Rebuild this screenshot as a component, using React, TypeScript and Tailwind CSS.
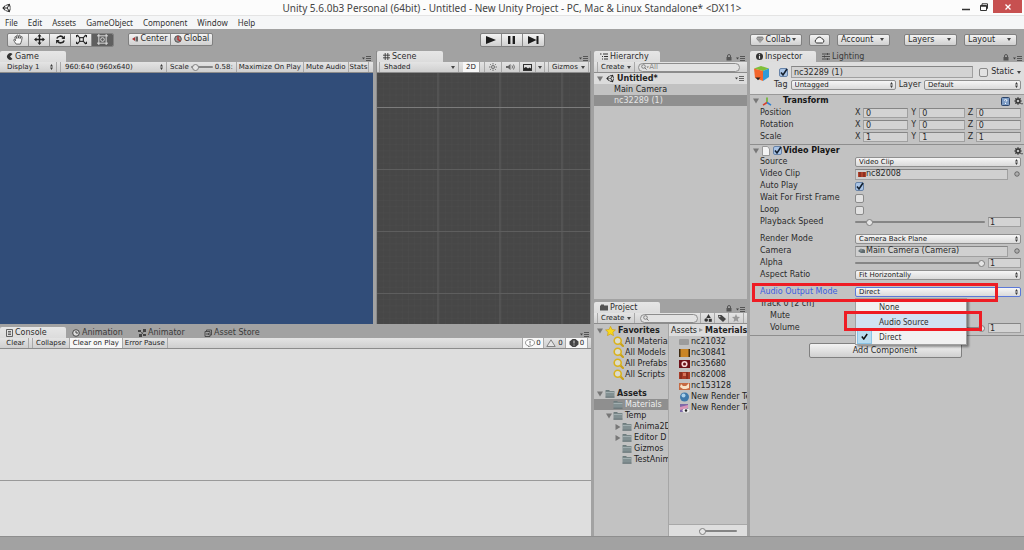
import React from "react";
import type { ReactNode } from "react";
import { FaUnity } from "react-icons/fa";

const track =
  "appearance-none bg-transparent h-[8px] min-w-0 [&::-webkit-slider-runnable-track]:h-[2px] [&::-webkit-slider-runnable-track]:rounded-full [&::-webkit-slider-runnable-track]:bg-[#858585] [&::-webkit-slider-thumb]:appearance-none [&::-webkit-slider-thumb]:-mt-[2px] [&::-webkit-slider-thumb]:size-[7px] [&::-webkit-slider-thumb]:rounded-full [&::-webkit-slider-thumb]:bg-[#e6e6e6] [&::-webkit-slider-thumb]:border [&::-webkit-slider-thumb]:border-[#808080]";

const fieldBox =
  "h-[10px] min-w-0 w-full border border-[#a0a0a0] border-t-[#858585] bg-[#d3d3d3] px-[2px] text-[8px] leading-[8px] text-[#2b2b2b]";

const raised =
  "bg-linear-to-b from-[#f3f3f3] to-[#d0d0d0] border border-[#808080] rounded-[2px]";

function Down({ className = "" }: { className?: string }) {
  return (
    <svg viewBox="0 0 4 3" className={`w-[4px] h-[3px] shrink-0 ${className}`} aria-hidden="true">
      <path d="M0 0h4L2 3z" fill="#444" />
    </svg>
  );
}

function UpDown() {
  return (
    <svg viewBox="0 0 3 6" className="pointer-events-none absolute right-[3px] top-[2px] h-[6px] w-[3px]" aria-hidden="true">
      <path d="M0 2.5 1.5 0 3 2.5zM0 3.5h3L1.500 6z" fill="#3a3a3a" />
    </svg>
  );
}

function Lock() {
  return (
    <svg viewBox="0 0 6 7" className="h-[7px] w-[6px]" aria-hidden="true">
      <path d="M1.500 3V2a1.500 1.500 0 0 1 3 0v1" fill="none" stroke="#555" />
      <rect x="0.500" y="3" width="5" height="3.500" fill="#555" />
    </svg>
  );
}

function PaneMenu({ lock = false }: { lock?: boolean }) {
  return (
    <div className="ml-auto flex items-end gap-[4px] pb-[1px] pr-[2px]">
      {lock && <Lock />}
      <button aria-label="Pane menu" className="block">
        <svg viewBox="0 0 9 5" className="h-[5px] w-[9px]">
          <path d="M0 1.500h3L1.500 3.500z" fill="#444" />
          <path d="M4 .5h5M4 2.500h5M4 4.500h5" stroke="#555" />
        </svg>
      </button>
    </div>
  );
}

function Tab({ icon, children, active = false, wide = false }: { icon: ReactNode; children: ReactNode; active?: boolean; wide?: boolean }) {
  return (
    <button
      className={`flex h-full shrink-0 items-center gap-[2px] pl-[6px] text-[8px] leading-[10px] whitespace-nowrap ${wide ? "" : "w-[66px]"} ${
        active ? "rounded-t-[2px] bg-linear-to-b from-[#e6e6e6] to-[#dcdcdc] text-[#2d2d2d]" : "text-[#3a3a3a]"
      }`}
    >
      {icon}
      {children}
    </button>
  );
}

function TabBar({ children, lock, menu = true }: { children: ReactNode; lock?: boolean; menu?: boolean }) {
  return (
    <div className="flex h-[11px] shrink-0 bg-[#a2a2a2]">
      {children}
      {menu && <PaneMenu lock={lock} />}
    </div>
  );
}

function Bar({ children }: { children?: ReactNode }) {
  return (
    <div className="flex h-[11px] shrink-0 items-stretch overflow-hidden border-b border-[#8c8c8c] bg-linear-to-b from-[#e4e4e4] to-[#cfcfcf] text-[7px] leading-[10px] whitespace-nowrap text-[#222222]">
      {children}
    </div>
  );
}

function BarButton({ children, on = false, className = "px-[3px]", label }: { children: ReactNode; on?: boolean; className?: string; label?: string }) {
  return (
    <button aria-label={label} className={`flex shrink-0 items-center justify-center border-r border-[#a9a9a9] ${on ? "bg-[#f7f7f7]" : ""} ${className}`}>
      {children}
    </button>
  );
}

function BarSelect({ value, label, className, updown = false }: { value: string; label: string; className: string; updown?: boolean }) {
  return (
    <div className={`relative shrink-0 border-r border-[#a9a9a9] ${className}`}>
      <select aria-label={label} className="block h-full w-full appearance-none bg-transparent pl-[4px] text-[7px] leading-[10px]">
        <option>{value}</option>
      </select>
      {updown ? <UpDown /> : <Down className="pointer-events-none absolute right-[3px] top-[4px]" />}
    </div>
  );
}

function Popup({ id, value, label, focus = false }: { id?: string; value: string; label?: string; focus?: boolean }) {
  return (
    <div className="relative w-full min-w-0">
      <select
        id={id}
        aria-label={label}
        className={`block h-[10px] w-full appearance-none rounded-[2px] border bg-linear-to-b from-[#f6f6f6] to-[#dadada] pl-[3px] text-[7px] leading-[8px] text-[#222222] ${
          focus ? "border-[#5b78d8]" : "border-[#8f8f8f]"
        }`}
      >
        <option>{value}</option>
      </select>
      <UpDown />
    </div>
  );
}

function Check({ id, checked = false, label }: { id?: string; checked?: boolean; label?: string }) {
  return (
    <span className="relative block size-[9px] shrink-0">
      <input
        id={id}
        type="checkbox"
        aria-label={label}
        defaultChecked={checked}
        className="peer block size-[9px] appearance-none rounded-[2px] border border-[#8a8a8a] bg-[#e2e2e2] checked:border-[#6783a8] checked:bg-[#a9c4e6]"
      />
      <svg viewBox="0 0 9 9" className="pointer-events-none absolute inset-0 hidden size-[9px] peer-checked:block">
        <path d="M2 4.500 4 7 8 1" fill="none" stroke="#14202e" strokeWidth="1.600" />
      </svg>
    </span>
  );
}

function Row({ label, id, children, indent = false, blue = false }: { label: string; id?: string; children?: ReactNode; indent?: boolean; blue?: boolean }) {
  return (
    <div className={`grid h-[12px] grid-cols-[95px_1fr] items-center pr-[3px] pl-[10px] ${blue ? "text-[#3a5fe0]" : ""}`}>
      <label htmlFor={id} className={`whitespace-nowrap ${indent ? "pl-[10px]" : ""}`}>
        {label}
      </label>
      {children}
    </div>
  );
}

function SliderField({ id, value, label }: { id: string; value: number; label: string }) {
  return (
    <div className="flex items-center gap-[3px]">
      <input id={id} type="range" min={0} max={100} defaultValue={value} className={`flex-1 ${track}`} />
      <input aria-label={label} defaultValue="1" className="h-[10px] w-[33px] border border-[#a0a0a0] border-t-[#858585] bg-[#d3d3d3] px-[1px] text-[8px] leading-[8px]" />
    </div>
  );
}

function ObjectField({ icon, children }: { icon: ReactNode; children: ReactNode }) {
  return (
    <div className="flex items-center gap-[6px] pr-[1px]">
      <button className="flex h-[11px] flex-1 items-center border border-[#a0a0a0] border-t-[#858585] bg-[#d0d0d0] pl-[2px] whitespace-nowrap">
        {icon}
        {children}
      </button>
      <svg viewBox="0 0 6 6" className="size-[6px] shrink-0">
        <circle cx="3" cy="3" r="2.200" fill="none" stroke="#555" strokeWidth=".9" />
        <circle cx="3" cy="3" r=".5" fill="#555" />
      </svg>
    </div>
  );
}

function Fold({ open = true }: { open?: boolean }) {
  return (
    <svg viewBox="0 0 6 6" className="size-[6px] shrink-0" aria-hidden="true">
      <path d={open ? "M0 .5h6L3 5.500z" : "M.5 0v6l5-3z"} fill="#777" />
    </svg>
  );
}

function Folder({ className = "" }: { className?: string }) {
  return (
    <svg viewBox="0 0 10 9" className={`h-[9px] w-[10px] shrink-0 ${className}`} aria-hidden="true">
      <path d="M.5 1.500Q.5 1 1 1h3l1 1h4q.5 0 .5.500v1h-9z" fill="#6d7b7d" />
      <path d="M.5 3h9v5q0 .5-.5.500H1q-.5 0-.5-.5z" fill="#829092" />
      <path d="M.5 3.300h9" stroke="#b4c0c2" strokeWidth=".8" />
      <path d="M.5 8.200h9" stroke="#59686b" strokeWidth=".8" />
    </svg>
  );
}

function Magnifier() {
  return (
    <svg viewBox="0 0 11 11" className="size-[11px] shrink-0" aria-hidden="true">
      <path d="m7 7 3 3" stroke="#c9a21a" strokeWidth="2.200" strokeLinecap="round" />
      <circle cx="4.700" cy="4.700" r="3.500" fill="#dcdccc" stroke="#d9b21c" strokeWidth="1.600" />
    </svg>
  );
}

function Gear() {
  return (
    <svg viewBox="0 0 9 8" className="h-[8px] w-[9px] shrink-0" aria-hidden="true">
      <circle cx="4" cy="4" r="2" fill="none" stroke="#333" strokeWidth="1.400" />
      <path d="M4 .3v1.500M4 6.200v1.500M.3 4h1.500M6.200 4h1.500M1.400 1.400l1 1M5.600 5.600l1 1M1.400 6.600l1-1M5.600 2.400l1-1" stroke="#333" strokeWidth="1.200" />
      <path d="M7 6.300h2L8 7.800z" fill="#333" />
    </svg>
  );
}

function SearchBox({ placeholder = "", label }: { placeholder?: string; label: string }) {
  return (
    <div className="flex h-[9px] min-w-0 flex-1 items-center self-center rounded-full border border-[#8d8d8d] bg-[#e2e2e2] pl-[2px]">
      <svg viewBox="0 0 8 6" className="h-[6px] w-[8px] shrink-0" aria-hidden="true">
        <circle cx="2.500" cy="2.500" r="1.800" fill="none" stroke="#777" strokeWidth=".9" />
        <path d="m3.800 3.800 1.700 1.800" stroke="#777" />
        {placeholder && <path d="M5.500 2.500h2.500L6.700 4z" fill="#777" />}
      </svg>
      <input aria-label={label} placeholder={placeholder} className="h-[8px] w-full min-w-0 bg-transparent text-[7px] leading-[8px] placeholder:text-[#888888]" />
    </div>
  );
}

function Tool({ children, label, on = false }: { children: ReactNode; label: string; on?: boolean }) {
  return (
    <button aria-label={label} className={`flex w-[21px] items-center justify-center border-r border-[#8a8a8a] last:border-r-0 ${on ? "bg-[#5f5f5f]" : ""}`}>
      {children}
    </button>
  );
}

function TopMenu({ children, className }: { children: ReactNode; className: string }) {
  return (
    <button className={`flex h-[12px] items-center justify-between pr-[5px] pl-[3px] ${raised} ${className}`}>
      {children}
      <Down />
    </button>
  );
}

const axes = ["X", "Y", "Z"];

function Vector({ name, value }: { name: string; value: string }) {
  return (
    <Row label={name}>
      <div className="grid grid-cols-3 gap-[3px]">
        {axes.map((a) => (
          <label key={a} className="flex min-w-0 items-center gap-[1px]">
            <span className="w-[7px] shrink-0">{a}</span>
            <input aria-label={`${name} ${a}`} defaultValue={value} className={fieldBox} />
          </label>
        ))}
      </div>
    </Row>
  );
}

function TitleBar() {
  return (
    <header className="flex h-[15px] items-center bg-[#fcfcfc] pr-[12px] font-['Noto_Sans',sans-serif]">
      <FaUnity className="ml-[2px] size-[10px] shrink-0 text-[#222222]" />
      <h1 className="flex-1 text-center text-[10px] leading-[14px] whitespace-nowrap text-[#444444]">
        Unity 5.6.0b3 Personal (64bit) - Untitled - New Unity Project - PC, Mac &amp; Linux Standalone* &lt;DX11&gt;
      </h1>
      <div className="absolute top-0 right-[2px] flex h-[13px] items-center gap-[10px]">
        <button aria-label="Minimize">
          <svg viewBox="0 0 8 8" className="size-[8px]"><path d="M0 6.500h8" stroke="#333" strokeWidth="1.500" /></svg>
        </button>
        <button aria-label="Restore">
          <svg viewBox="0 0 8 8" className="size-[8px]">
            <path d="M2 2V.8h5.500V5.500H6.500" fill="none" stroke="#333" />
            <path d="M.5 2.500h6v5h-6z" fill="#fff" stroke="#333" />
            <path d="M.5 3h6" stroke="#333" strokeWidth="1.500" />
          </svg>
        </button>
        <button aria-label="Close" className="-ml-[5px] flex h-[13px] w-[29px] items-center justify-center bg-[#c75050]">
          <svg viewBox="0 0 6 6" className="size-[6px]"><path d="m.5.5 5 5M5.500.5l-5 5" stroke="#fff" strokeWidth="1.300" /></svg>
        </button>
      </div>
    </header>
  );
}

function MainToolbar() {
  return (
    <div className="grid h-[22px] shrink-0 grid-cols-[1fr_auto_1fr] items-center bg-[#a2a2a2] px-[7px] pb-[1px] text-[8px]">
      <div className="flex gap-[14px]">
        <div className={`flex h-[14px] overflow-hidden ${raised}`}>
          <Tool label="Hand">
            <svg viewBox="0 0 12 12" className="size-[11px]">
              <path d="M3.500 11C2 9 1 7.500.8 6.300c.6-.6 1.400 0 2 .9L2 3.300c.5-.8 1.200-.5 1.500.3L4.200 5 4 1.600c.5-.8 1.300-.6 1.500.2L6 4.600l.6-3c.4-.6 1.300-.4 1.300.4L7.700 5l1.200-2c.7-.6 1.400 0 1.100.8C9.500 6 9.500 8 8 11z" fill="#fafafa" stroke="#333" strokeWidth=".8" />
            </svg>
          </Tool>
          <Tool label="Move">
            <svg viewBox="0 0 12 12" className="size-[11px]">
              <path d="M6 1v10M1 6h10" stroke="#222" strokeWidth="1.500" />
              <path d="M6 0 8.200 2.800H3.800zM6 12l2.200-2.800H3.800zM0 6l2.800-2.200v4.400zM12 6 9.200 3.800v4.400z" fill="#222" />
            </svg>
          </Tool>
          <Tool label="Rotate">
            <svg viewBox="0 0 12 12" className="size-[11px]">
              <path d="M2 5C3 1.800 7.500 1.500 9 4M10 7c-1 3.200-5.500 3.500-7 1" fill="none" stroke="#222" strokeWidth="1.700" />
              <path d="M10.800 1.500V5.500H7zM1.200 10.500v-4H5z" fill="#222" />
            </svg>
          </Tool>
          <Tool label="Scale">
            <svg viewBox="0 0 12 12" className="size-[11px]">
              <path d="m1 1 10 10M11 1 1 11" stroke="#222" strokeWidth="1.200" />
              <path d="M0 1h3L0 4zM12 1v3L9 1zM0 11V8l3 3zM12 11H9l3-3z" fill="#222" />
              <rect x="4" y="4" width="4" height="4" fill="#eee" stroke="#222" strokeWidth="1.200" />
            </svg>
          </Tool>
          <Tool label="Rect" on>
            <svg viewBox="0 0 12 12" className="size-[11px]">
              <path d="M2 0v12M10 0v12M0 2h12M0 10h12" stroke="#e6e6e6" strokeWidth="1" />
              <circle cx="6" cy="6" r="2" fill="none" stroke="#ddd" strokeWidth="1" />
            </svg>
          </Tool>
        </div>
        <div className={`flex h-[13px] text-[#2a2a2a] ${raised}`}>
          <button className="flex w-[42px] items-center justify-center gap-[2px] border-r border-[#8a8a8a]">
            <svg viewBox="0 0 7 6" className="h-[6px] w-[7px]"><path d="M0 3 3 1v4z" fill="#a33" /><path d="M3.500.5H6v5H3.500z" fill="#666" /></svg>
            Center
          </button>
          <button className="flex w-[41px] items-center justify-center gap-[2px]">
            <svg viewBox="0 0 8 8" className="size-[8px]"><circle cx="4" cy="4" r="3.300" fill="#999" stroke="#555" /><path d="M4 1v3.500l2.500 1.500" fill="none" stroke="#b33" strokeWidth="1.400" /></svg>
            Global
          </button>
        </div>
      </div>
      <div className={`flex h-[14px] ${raised}`}>
        <Tool label="Play"><svg viewBox="0 0 10 8" className="h-[8px] w-[10px]"><path d="M0 0 10 4 0 8z" fill="#1c1c1c" /></svg></Tool>
        <Tool label="Pause"><svg viewBox="0 0 7 8" className="h-[8px] w-[7px]"><path d="M0 0h2.400v8H0zM4.600 0H7v8H4.600z" fill="#1c1c1c" /></svg></Tool>
        <Tool label="Step"><svg viewBox="0 0 11 8" className="h-[8px] w-[11px]"><path d="M0 0 8.500 4 0 8zM8.500 0h2v8h-2z" fill="#1c1c1c" /></svg></Tool>
      </div>
      <div className="flex justify-end gap-[7px] text-[#2a2a2a]">
        <button className={`flex h-[12px] w-[52px] items-center justify-center gap-[2px] ${raised}`}>
          <svg viewBox="0 0 8 7" className="h-[7px] w-[8px]"><path d="M1.500.5h5L8 2.500 4 7 0 2.500z" fill="#888" /><path d="M0 2.500h8M4 7 2.500 2.500M4 7l1.500-4.500" stroke="#bbb" strokeWidth=".5" /></svg>
          Collab
          <Down />
        </button>
        <button aria-label="Cloud services" className={`flex h-[12px] w-[21px] items-center justify-center ${raised}`}>
          <svg viewBox="0 0 11 8" className="h-[8px] w-[11px]"><path d="M2.700 7a2 2 0 0 1-.2-3.800 3 3 0 0 1 5.600-.4A2.200 2.200 0 0 1 8.500 7z" fill="#f5f5f5" stroke="#333" /></svg>
        </button>
        <TopMenu className="w-[53px]">Account</TopMenu>
        <TopMenu className="ml-[7px] w-[53px]">Layers</TopMenu>
        <TopMenu className="w-[53px]">Layout</TopMenu>
      </div>
    </div>
  );
}

function GamePane() {
  return (
    <section className="flex min-w-0 flex-col bg-[#314d79]">
      <TabBar>
        <Tab active icon={<svg viewBox="0 0 7 7" className="size-[7px]"><path d="M6.500 1A3.300 3.300 0 1 0 6.500 6L4 3.500z" fill="#333" /></svg>}>Game</Tab>
      </TabBar>
      <Bar>
        <BarSelect label="Display" value="Display 1" className="ml-[3px] w-[54px]" updown />
        <BarSelect label="Resolution" value="960:640 (960x640)" className="ml-[3px] w-[107px] border-l" updown />
        <label className="flex shrink-0 items-center gap-[2px] border-r border-[#a9a9a9] px-[3px]">
          Scale
          <input type="range" min={0} max={100} defaultValue={5} className={`w-[22px] ${track}`} />
          <span>0.58:</span>
        </label>
        <BarButton className="px-[2px]">Maximize On Play</BarButton>
        <BarButton className="px-[2px]">Mute Audio</BarButton>
        <BarButton className="px-[1px]">Stats</BarButton>
      </Bar>
    </section>
  );
}

function ScenePane() {
  return (
    <section className="flex min-w-0 flex-col border-x border-[#8c8c8c] bg-[#474747]">
      <TabBar>
        <Tab active icon={<svg viewBox="0 0 8 8" className="size-[7px]"><path d="M2.500 0v8M5.500 0v8M0 2.500h8M0 5.500h8" stroke="#333" /></svg>}>Scene</Tab>
      </TabBar>
      <Bar>
        <BarSelect label="Draw mode" value="Shaded" className="ml-[2px] w-[80px] border-l" />
        <BarButton on className="ml-[4px] w-[17px]">2D</BarButton>
        <BarButton label="Lighting" className="ml-[4px] w-[18px] border-l">
          <svg viewBox="0 0 8 8" className="size-[8px]"><circle cx="4" cy="4" r="1.500" fill="none" stroke="#555" strokeWidth=".8" /><path d="M4 0v1.500M4 6.500V8M0 4h1.500M6.500 4H8M1.200 1.200l1 1M5.800 5.800l1 1M1.200 6.800l1-1M5.800 2.200l1-1" stroke="#555" strokeWidth=".8" /></svg>
        </BarButton>
        <BarButton label="Audio" className="w-[18px]">
          <svg viewBox="0 0 10 8" className="h-[8px] w-[10px]"><path d="M0 3h2l2.500-2v6L2 5H0z" fill="#666" /><path d="M6 2.500q1 1.500 0 3M7.500 1.500q1.800 2.500 0 5" fill="none" stroke="#666" strokeWidth=".9" /></svg>
        </BarButton>
        <BarButton label="Effects" className="w-[16px]">
          <svg viewBox="0 0 9 7" className="h-[7px] w-[9px]"><rect x=".5" y=".5" width="8" height="6" fill="#ddd" stroke="#333" /><path d="M1 6V4l2-1 2 1.500 1.500-1L8 4.500V6z" fill="#222" /></svg>
        </BarButton>
        <BarButton label="Effects menu" className="w-[9px]"><Down /></BarButton>
        <BarButton className="ml-[3px] gap-[3px] border-l px-[3px]">Gizmos<Down /></BarButton>
        <div className="ml-[3px] flex w-[60px] shrink-0"><SearchBox label="Search scene" /></div>
      </Bar>
      <svg className="min-h-0 w-full flex-1" aria-label="Scene grid">
        <defs>
          <pattern id="minor" width="6.200" height="6.200" patternUnits="userSpaceOnUse" y="34">
            <path d="M0 0H6.200M0 0V6.200" stroke="#4d4d4d" strokeWidth=".7" />
          </pattern>
          <pattern id="major" width="62" height="62" patternUnits="userSpaceOnUse" x="0" y="34">
            <path d="M0 .5H62M61 0V62" stroke="#5e5e5e" strokeWidth="1" />
          </pattern>
        </defs>
        <rect width="100%" height="100%" fill="url(#minor)" />
        <rect width="100%" height="100%" fill="url(#major)" />
        <path d="M0 34.500H4000" stroke="#7c7c7c" />
      </svg>
    </section>
  );
}

function ConsolePane() {
  return (
    <section className="flex min-h-0 flex-[209] flex-col bg-[#dedede]">
      <TabBar>
        <Tab active icon={<svg viewBox="0 0 7 8" className="h-[8px] w-[7px]"><path d="M.5.5h6v7h-6zM2 2.500h3M2 4h3M2 5.500h3" fill="none" stroke="#555" strokeWidth=".9" /></svg>}>Console</Tab>
        <Tab icon={<svg viewBox="0 0 8 8" className="size-[8px]"><circle cx="4" cy="4" r="3.300" fill="#ddd" stroke="#444" /><path d="M4 2v2h2" fill="none" stroke="#444" /></svg>}>Animation</Tab>
        <Tab icon={<svg viewBox="0 0 8 8" className="size-[8px]"><path d="M0 1h3v2H0zM5 0h3v3H5zM1 5h3v3H1zM5 5h3v2H5z" fill="#444" /><path d="M2 2l4 4M6 2 3 6" stroke="#444" strokeWidth=".7" /></svg>}>Animator</Tab>
        <Tab wide icon={<svg viewBox="0 0 8 8" className="size-[8px]"><path d="M1 2.500h5v5H1zM2.500 2.500V1h5v5H6M3 4v2M4.500 4v2" fill="none" stroke="#444" strokeWidth=".9" /></svg>}>Asset Store</Tab>
      </TabBar>
      <Bar>
        <BarButton className="ml-[3px] w-[26px]">Clear</BarButton>
        <BarButton className="ml-[3px] border-l px-[3px]">Collapse</BarButton>
        <BarButton on>Clear on Play</BarButton>
        <BarButton className="px-[2px]">Error Pause</BarButton>
        <div className="ml-auto flex pr-[3px]">
          <BarButton on className="w-[22px] gap-[1px] border-l">
            <svg viewBox="0 0 10 8" className="h-[8px] w-[10px]"><path d="M5 .5c2.500 0 4.500 1.300 4.500 3.300S7.500 7 5 7L3.500 8V6.800C1.500 6.400.5 5.300.5 3.800.5 1.800 2.500.5 5 .5z" fill="#fff" stroke="#777" strokeWidth=".8" /><path d="M5 2v2.500M5 5.200v.9" stroke="#666" /></svg>0
          </BarButton>
          <BarButton className="w-[22px] gap-[2px]">
            <svg viewBox="0 0 10 8" className="h-[8px] w-[10px]"><path d="M5 .8 9.200 7.500H.8z" fill="#e4e4e4" stroke="#777" strokeWidth=".9" /></svg>0
          </BarButton>
          <BarButton on className="w-[22px] gap-[1px]">
            <svg viewBox="0 0 10 8" className="h-[8px] w-[10px]"><path d="M3.500 0h3L9.500 2.500v3L6.500 8h-3L.5 5.500v-3z" fill="#444" /><path d="M5 1.500v3M5 5.500v1" stroke="#ddd" /></svg>0
          </BarButton>
        </div>
      </Bar>
      <div className="flex-[131] border-b border-[#999999]" />
      <div className="flex-[55]" />
    </section>
  );
}

function HierarchyPane() {
  return (
    <section className="flex min-h-0 flex-[249] flex-col bg-[#c2c2c2]">
      <TabBar lock>
        <Tab active icon={<svg viewBox="0 0 8 7" className="h-[7px] w-[8px]"><path d="M0 1h1.500M3 1h5M2 3.500h1M4 3.500h4M2 6h1M4 6h4" stroke="#333" /></svg>}>Hierarchy</Tab>
      </TabBar>
      <Bar>
        <BarButton className="ml-[3px] mr-[3px] gap-[3px] border-l px-[3px]">Create<Down /></BarButton>
        <SearchBox label="Search hierarchy" placeholder="All" />
        <span className="w-[7px]" />
      </Bar>
      <ul className="text-[8px] leading-[11px] text-[#222222]">
        <li className="flex h-[11px] items-center gap-[3px] bg-[#dcdcdc] pr-[3px] pl-[3px] font-bold">
          <Fold />
          <FaUnity className="size-[9px]" />
          <span className="-ml-px">Untitled*</span>
          <svg viewBox="0 0 9 5" className="ml-auto h-[5px] w-[9px]"><path d="M0 1.500h3L1.500 3.500z" fill="#444" /><path d="M4 .5h5M4 2.500h5M4 4.500h5" stroke="#666" /></svg>
        </li>
        <li className="pl-[20px]">Main Camera</li>
        <li className="bg-[#8f8f8f] pl-[20px] text-[#e6e6e6]">nc32289 (1)</li>
      </ul>
    </section>
  );
}

function TreeRow({ icon, children, pad, fold, selected = false, bold = false }: { icon: ReactNode; children: ReactNode; pad: string; fold?: "open" | "closed"; selected?: boolean; bold?: boolean }) {
  return (
    <li className={`flex h-[11px] items-center gap-[1px] overflow-hidden whitespace-nowrap ${pad} ${selected ? "bg-[#8f8f8f] text-[#eeeeee]" : ""} ${bold ? "font-bold" : ""}`}>
      {fold ? <Fold open={fold === "open"} /> : <span className="w-[6px] shrink-0" />}
      {icon}
      {children}
    </li>
  );
}

function Asset({ icon, children }: { icon: ReactNode; children: ReactNode }) {
  return (
    <li className="flex h-[11px] items-center gap-[1px] overflow-hidden pl-[10px] whitespace-nowrap">
      {icon}
      {children}
    </li>
  );
}

function ProjectPane() {
  return (
    <section className="flex min-h-0 flex-[234] flex-col bg-[#c2c2c2]">
      <TabBar lock>
        <Tab active icon={<svg viewBox="0 0 8 7" className="h-[7px] w-[8px]"><path d="M0 1.500h1V.5h3v1h4V6.500H0z" fill="#555" /></svg>}>Project</Tab>
      </TabBar>
      <Bar>
        <BarButton className="ml-[3px] mr-[5px] gap-[3px] border-l px-[3px]">Create<Down /></BarButton>
        <SearchBox label="Search project" />
        <BarButton label="Search by type" className="ml-[2px] w-[15px] border-l">
          <svg viewBox="0 0 8 8" className="size-[8px]"><path d="M4.500 0 6.800 4H2.200z" fill="#333" /><circle cx="2.200" cy="6" r="1.800" fill="#333" /><path d="M4.800 4.800h3v3h-3z" fill="#333" /></svg>
        </BarButton>
        <BarButton label="Search by label" className="w-[14px]">
          <svg viewBox="0 0 8 8" className="size-[8px]"><path d="M0 1h3.500L8 5 5 8 .5 4z" fill="#444" /><circle cx="1.800" cy="2.500" r=".7" fill="#ddd" /></svg>
        </BarButton>
        <BarButton label="Save search" className="mr-[3px] w-[15px]">
          <svg viewBox="0 0 8 8" className="size-[8px]"><path d="m4 0 1.200 2.800L8 3 5.800 5l.7 3L4 6.400 1.500 8l.7-3L0 3l2.800-.2z" fill="#999" /></svg>
        </BarButton>
      </Bar>
      <div className="grid min-h-0 flex-1 grid-cols-[75fr_78fr] text-[8px] leading-[11px] text-[#222222]">
        <ul className="min-w-0 overflow-hidden border-r border-[#a6a6a6] pt-[1px]">
          <TreeRow bold fold="open" pad="pl-[3px]" icon={<svg viewBox="0 0 11 10" className="mr-[1px] ml-[1px] h-[10px] w-[11px] shrink-0"><path d="m5.500.3 1.500 3.200 3.400.4-2.500 2.300.7 3.500L5.500 8 2.400 9.700l.7-3.500L.6 3.900l3.400-.4z" fill="#f8d81c" stroke="#c99a18" strokeWidth=".6" /></svg>}>Favorites</TreeRow>
          {["All Materia", "All Models", "All Prefabs", "All Scripts"].map((s) => (
            <TreeRow key={s} pad="pl-[12px]" icon={<Magnifier />}>{s}</TreeRow>
          ))}
          <li className="h-[8px]" />
          <TreeRow bold fold="open" pad="pl-[3px]" icon={<Folder className="mr-[1px] ml-[1px]" />}>Assets</TreeRow>
          <TreeRow selected pad="pl-[12px]" icon={<Folder className="mr-[1px]" />}>Materials</TreeRow>
          <TreeRow fold="open" pad="pl-[12px]" icon={<Folder className="mr-[1px]" />}>Temp</TreeRow>
          <TreeRow fold="closed" pad="pl-[21px]" icon={<Folder className="mr-[1px]" />}>Anima2D</TreeRow>
          <TreeRow fold="closed" pad="pl-[21px]" icon={<Folder className="mr-[1px]" />}>Editor D</TreeRow>
          <TreeRow pad="pl-[21px]" icon={<Folder className="mr-[1px]" />}>Gizmos</TreeRow>
          <TreeRow pad="pl-[21px]" icon={<Folder className="mr-[1px]" />}>TestAnim</TreeRow>
        </ul>
        <div className="flex min-w-0 flex-col">
          <nav className="flex h-[12px] shrink-0 items-center gap-[2px] overflow-hidden bg-[#dcdcdc] pl-[2px] whitespace-nowrap">
            <span>Assets</span>
            <svg viewBox="0 0 4 4" className="size-[4px] shrink-0"><path d="M0 0v4l4-2z" fill="#999" /></svg>
            <strong>Materials</strong>
          </nav>
          <ul className="flex-1">
            <Asset icon={<svg viewBox="0 0 11 8" className="h-[8px] w-[11px] shrink-0"><rect y="1" width="10" height="6" rx="1" fill="#9c9c9c" /></svg>}>nc21032</Asset>
            <Asset icon={<svg viewBox="0 0 11 8" className="h-[8px] w-[11px] shrink-0"><rect width="11" height="8" fill="#3d2a12" /><rect x="1.500" width="8" height="8" fill="#c98526" /></svg>}>nc30841</Asset>
            <Asset icon={<svg viewBox="0 0 11 8" className="h-[8px] w-[11px] shrink-0"><rect width="11" height="8" fill="#6c1118" /><circle cx="5.500" cy="4" r="2.300" fill="none" stroke="#f6d5d5" strokeWidth="1.600" /></svg>}>nc35680</Asset>
            <Asset icon={<svg viewBox="0 0 11 8" className="h-[8px] w-[11px] shrink-0"><rect y="1" width="11" height="7" fill="#a63a26" /><path d="M2 1v7M8 1v7" stroke="#6d2117" /><path d="M4 2h3v3H4z" fill="#d5765c" /></svg>}>nc82008</Asset>
            <Asset icon={<svg viewBox="0 0 11 8" className="h-[8px] w-[11px] shrink-0"><rect y="1" width="11" height="7" fill="#c56a43" /><path d="M2 2l2 2h3l3-3v5L7 7H4L1 5z" fill="#f8e3c8" /></svg>}>nc153128</Asset>
            <Asset icon={<svg viewBox="0 0 11 10" className="h-[10px] w-[11px] shrink-0"><circle cx="5.500" cy="5" r="4.500" fill="#3f79ab" /><circle cx="4.500" cy="3.500" r="2" fill="#a9d0ea" /></svg>}>New Render Te</Asset>
            <Asset icon={<svg viewBox="0 0 11 10" className="h-[10px] w-[11px] shrink-0"><rect x="1" y="1" width="8" height="8" fill="#7d6aa8" /><path d="M1 4 9 2v3L1 7z" fill="#d895b8" /><ellipse cx="7" cy="7.500" rx="3.500" ry="2" fill="#eee" /><circle cx="7" cy="7.500" r="1.200" fill="#222" /></svg>}>New Render Te</Asset>
          </ul>
          <div className="flex h-[12px] shrink-0 items-center justify-end border-t border-[#a8a8a8] bg-[#dedede] pr-[10px]">
            <input type="range" aria-label="Icon size" min={0} max={100} defaultValue={0} className={`w-[38px] ${track}`} />
          </div>
        </div>
      </div>
    </section>
  );
}

function Inspector() {
  return (
    <section className="flex min-w-0 flex-col bg-[#c2c2c2] text-[8px] leading-[12px] text-[#2b2b2b]">
      <TabBar lock>
        <Tab active icon={<svg viewBox="0 0 7 7" className="size-[7px]"><circle cx="3.500" cy="3.500" r="3.500" fill="#333" /><path d="M3.500 1.200v1M3.500 3v2.800" stroke="#eee" strokeWidth="1.100" /></svg>}>Inspector</Tab>
        <Tab icon={<svg viewBox="0 0 8 7" className="h-[7px] w-[8px]"><path d="M0 1h8M0 3.500h8M0 6h8M5.500 0v2M2.500 2.500v2M5.500 5v2" stroke="#444" strokeWidth=".9" /></svg>}>Lighting</Tab>
      </TabBar>
      <div className="flex gap-[5px] border-b border-[#999999] bg-[#dedede] pt-[4px] pr-[3px] pb-[3px] pl-[4px]">
        <svg viewBox="0 0 15 15" className="size-[15px] shrink-0">
          <path d="M7 0 15 2.500 9 5 0 2.500z" fill="#7fbf3a" />
          <path d="M0 2.500 9 5v10L1 12z" fill="#f4662c" />
          <path d="M9 5 15 2.500V11L9 15z" fill="#2f9bd8" />
          <path d="M1.500 11.500h5L4 14.200z" fill="#222" />
        </svg>
        <div className="flex min-w-0 flex-1 flex-col gap-[1px]">
          <div className="flex h-[12px] items-center gap-[3px] pl-[5px]">
            <Check checked label="Active" />
            <input aria-label="Name" defaultValue="nc32289 (1)" className={`${fieldBox} h-[12px] flex-1`} />
            <label className="ml-[3px] flex shrink-0 items-center gap-[3px]"><Check /> Static</label>
            <Down />
          </div>
          <div className="flex h-[12px] items-center gap-[3px]">
            <label htmlFor="tag" className="shrink-0">Tag</label>
            <div className="min-w-0 flex-[104]"><Popup id="tag" value="Untagged" /></div>
            <label htmlFor="layer" className="shrink-0">Layer</label>
            <div className="min-w-0 flex-[96]"><Popup id="layer" value="Default" /></div>
          </div>
        </div>
      </div>
      <div className="pb-[1px]">
        <h2 className="flex h-[12px] items-center gap-[3px] pr-[1px] pl-[3px] font-bold text-[#151515]">
          <Fold />
          <svg viewBox="0 0 10 9" className="h-[9px] w-[10px]"><path d="M5 5.500V.5" stroke="#6bb52c" strokeWidth="1.600" /><path d="M5 5.500 1 8.200" stroke="#d8402a" strokeWidth="1.600" /><path d="m5 5.500 4 2.700" stroke="#2d7fd0" strokeWidth="1.600" /></svg>
          <span className="pl-[8px]">Transform</span>
          <span className="ml-auto flex items-center gap-[4px]">
            <svg viewBox="0 0 9 9" className="size-[9px]"><rect x=".5" y=".5" width="8" height="8" rx="1" fill="#7d9cc5" stroke="#2d4468" /><path d="M3 3.500Q4.500 1.500 6 3.200 6 4 4.500 5M4.500 6v1" fill="none" stroke="#fff" strokeWidth=".9" /></svg>
            <Gear />
          </span>
        </h2>
        <Vector name="Position" value="0" />
        <Vector name="Rotation" value="0" />
        <Vector name="Scale" value="1" />
      </div>
      <div className="border-t border-[#8e8e8e] pb-[1px]">
        <h2 className="flex h-[11px] items-center gap-[3px] pr-[1px] pl-[3px] font-bold text-[#151515]">
          <Fold />
          <svg viewBox="0 0 8 10" className="h-[10px] w-[8px]"><path d="M.5.5h5l2 2.500v6.500h-7z" fill="#f4f4f4" stroke="#999" /></svg>
          <Check checked label="Enabled" />
          <span className="-ml-[2px]">Video Player</span>
          <span className="ml-auto"><Gear /></span>
        </h2>
        <Row label="Source" id="source"><Popup id="source" value="Video Clip" /></Row>
        <Row label="Video Clip">
          <ObjectField icon={<svg viewBox="0 0 8 5" className="h-[5px] w-[8px]"><rect width="8" height="5" fill="#b1432c" /><path d="M2 0v5M6 0v5" stroke="#6d2117" /></svg>}>nc82008</ObjectField>
        </Row>
        <Row label="Auto Play" id="auto"><Check id="auto" checked /></Row>
        <Row label="Wait For First Frame" id="wait"><Check id="wait" /></Row>
        <Row label="Loop" id="loop"><Check id="loop" /></Row>
        <Row label="Playback Speed" id="speed"><SliderField id="speed" value={9} label="Playback speed value" /></Row>
        <div className="h-[5px]" />
        <Row label="Render Mode" id="render"><Popup id="render" value="Camera Back Plane" /></Row>
        <Row label="Camera">
          <ObjectField icon={<svg viewBox="0 0 8 6" className="h-[6px] w-[8px]"><path d="M0 3l2-1.500L5 1l2 1v3H3z" fill="#5f6c70" /><circle cx="3" cy="2" r="1.500" fill="#7e8a8e" /></svg>}>Main Camera (Camera)</ObjectField>
        </Row>
        <Row label="Alpha" id="alpha"><SliderField id="alpha" value={100} label="Alpha value" /></Row>
        <Row label="Aspect Ratio" id="aspect"><Popup id="aspect" value="Fit Horizontally" /></Row>
        <div className="h-[5px]" />
        <div className="relative">
          <Row label="Audio Output Mode" id="audio" blue><Popup id="audio" value="Direct" focus /></Row>
          <div className="pointer-events-none absolute -top-[3px] right-[26px] left-[2px] z-20 h-[19px] border-3 border-[#ee1c24]" />
          <div role="listbox" aria-label="Audio Output Mode" className="absolute top-[12px] left-[105px] z-10 flex w-[112px] flex-col border border-[#a0a0a0] bg-[#f1f1f1] font-['Noto_Sans',sans-serif] text-[8px] leading-[15px] text-[#333333] shadow-[2px_2px_2px_rgba(0,0,0,0.4)]">
            <button role="option" aria-selected={false} className="h-[15px] pl-[23px] text-left">None</button>
            <button role="option" aria-selected={false} className="relative h-[15px] bg-[#d1e2f2] pl-[23px] text-left">
              Audio Source
              <span className="pointer-events-none absolute -top-[3px] -right-[16px] -left-[12px] h-[20px] border-3 border-[#ee1c24]" />
            </button>
            <button role="option" aria-selected={true} className="flex h-[15px] items-center gap-[7px] pl-[1px]">
              <span className="flex h-[14px] w-[15px] items-center justify-center border border-[#8ac4e6] bg-[#b9dcef]">
                <svg viewBox="0 0 7 7" className="size-[7px]"><path d="M.8 3.500 2.800 6 6.200 1" fill="none" stroke="#111" strokeWidth="1.500" /></svg>
              </span>
              Direct
            </button>
          </div>
        </div>
        <Row label="Track 0 [2 ch]" />
        <Row label="Mute" id="mute" indent><Check id="mute" /></Row>
        <Row label="Volume" id="volume" indent><SliderField id="volume" value={100} label="Volume value" /></Row>
      </div>
      <div className="flex justify-center border-t border-[#8e8e8e] pt-[7px] pr-[4px]">
        <button className={`h-[15px] w-[153px] leading-[12px] ${raised}`}>Add Component</button>
      </div>
    </section>
  );
}

export default function App() {
  return (
    <main className="flex min-h-screen flex-col overflow-hidden bg-[#a2a2a2] font-['DejaVu_Sans',Verdana,sans-serif]">
      <TitleBar />
      <nav className="flex h-[14px] shrink-0 items-center gap-[10px] border-t border-[#e4e4e4] bg-[#f5f6f7] pl-[5px] font-['Noto_Sans',sans-serif] text-[8px] text-[#333333]">
        {["File", "Edit", "Assets", "GameObject", "Component", "Window", "Help"].map((m) => (
          <button key={m}>{m}</button>
        ))}
      </nav>
      <MainToolbar />
      <div className="grid flex-1 grid-cols-[minmax(0,1fr)_153px_274px] gap-[3px]">
        <div className="flex flex-col gap-[3px]">
          <div className="grid min-h-0 flex-[273] grid-cols-[373fr_215fr] gap-[3px]">
            <GamePane />
            <ScenePane />
          </div>
          <ConsolePane />
        </div>
        <div className="flex flex-col gap-[3px]">
          <HierarchyPane />
          <ProjectPane />
        </div>
        <Inspector />
      </div>
      <footer className="h-[14px] shrink-0 border-t border-[#8e8e8e]" />
    </main>
  );
}
